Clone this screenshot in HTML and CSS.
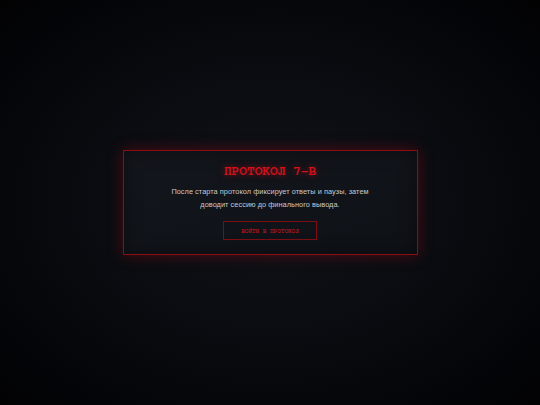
FILE: index.html
```html
<!DOCTYPE html>
<html lang="ru">
<head>
<meta charset="utf-8">
<title>Протокол 7-В</title>
<link rel="stylesheet" href="styles.css">
</head>
<body>
<main class="screen">
  <section class="card">
    <h1 class="title">ПРОТОКОЛ 7-В</h1>
    <p class="text">После старта протокол фиксирует ответы и паузы, затем<br>доводит сессию до финального вывода.</p>
    <button class="btn" type="button">ВОЙТИ В ПРОТОКОЛ</button>
  </section>
</main>
</body>
</html>
```
FILE: styles.css
```css
html, body {
  margin: 0;
  height: 100%;
}
body {
  background: radial-gradient(ellipse at 50% 50%, #0f1218 0%, #0a0c11 45%, #040508 80%, #020203 100%);
  font-family: "Liberation Sans", Arial, sans-serif;
}
.screen {
  height: 100%;
  display: flex;
  align-items: center;
  justify-content: center;
}
.card {
  width: 293px;
  height: 103px;
  box-sizing: content-box;
  border: 1px solid #8e0d12;
  background: linear-gradient(160deg, #13161c 0%, #0e1116 100%);
  box-shadow: 0 0 14px rgba(200, 10, 20, 0.35), inset 0 0 18px rgba(0, 0, 0, 0.4);
  display: flex;
  flex-direction: column;
  align-items: center;
}
.title {
  margin: 14px 0 0;
  font-family: "FreeMono", "Liberation Mono", "Courier New", monospace;
  font-weight: bold;
  font-size: 12.8px;
  line-height: 14px;
  color: #d3111a;
  text-shadow: 0 0 6px rgba(230, 20, 30, 0.6);
  letter-spacing: 0;
}
.text {
  margin: 6px 0 0;
  font-size: 7.35px;
  line-height: 13px;
  letter-spacing: 0.05px;
  color: #c9c9cc;
  text-align: center;
}
.btn {
  margin-top: 10px;
  width: 94px;
  height: 19px;
  padding: 0;
  background: transparent;
  border: 1px solid #7c0d12;
  font-family: "FreeMono", "Liberation Mono", "Courier New", monospace;
  font-weight: bold;
  font-size: 6px;
  color: #a8161d;
  letter-spacing: 0;
}
```
